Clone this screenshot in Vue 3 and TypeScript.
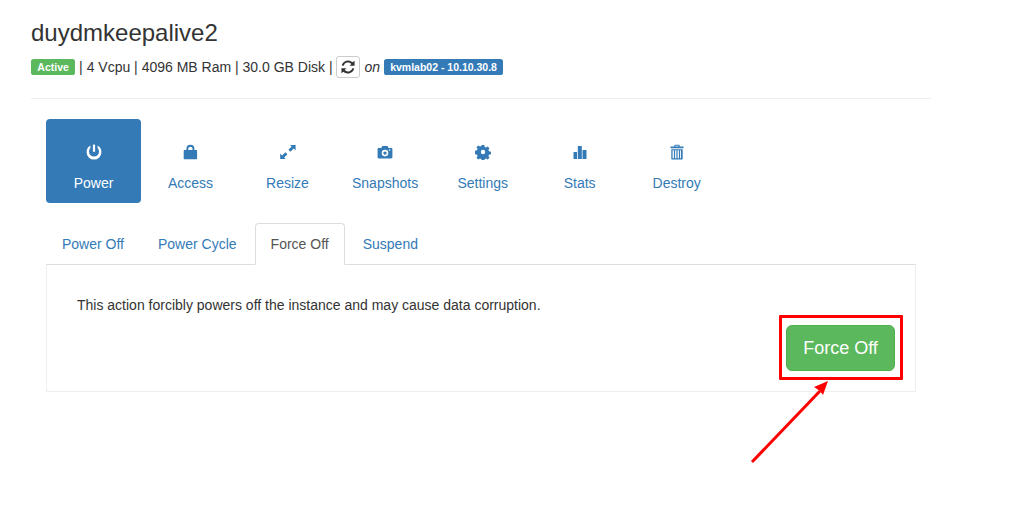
<script setup lang="ts">
interface PillItem {
  label: string;
  active?: boolean;
  paths: string[];
}

const pills: PillItem[] = [
  {
    label: "Power",
    active: true,
    paths: [
      "M6.900.6h2.200v7.200H6.900z",
      "M4.400 1.600v2.500a5 5 0 1 0 7.200 0V1.600a7.400 7.400 0 0 1 3.800 6.600 7.400 7.400 0 0 1-14.800 0 7.400 7.400 0 0 1 3.800-6.600z",
    ],
  },
  {
    label: "Access",
    paths: [
      "M3.400 6V4.800a4 4 0 0 1 8 0V6h2c.4 0 .7.300.7.700v7.900c0 .4-.3.700-.7.700H1.400c-.4 0-.7-.3-.7-.7V6.700c0-.4.3-.7.700-.7zm1.900-1.200V6h4.200V4.800c0-1.200-.9-2.100-2.100-2.100s-2.100.9-2.100 2.100z",
    ],
  },
  {
    label: "Resize",
    paths: [
      "M10 1h5.600v5.400l-1.900-1.900-3.300 3.300-2-2L11.700 2.500z",
      "M5.800 15H.2V9.600l1.900 1.900 3.300-3.300 2 2-3.300 3.300z",
    ],
  },
  {
    label: "Snapshots",
    paths: [
      "M.6 5.200c0-.7.500-1.200 1.200-1.200h2.500l1-1.900h5.200l1 1.900h2.700c.7 0 1.200.5 1.200 1.200v8.100c0 .7-.5 1.200-1.200 1.200H1.800c-.7 0-1.200-.5-1.200-1.200zM8 5.800a3.300 3.300 0 1 0 0 6.600 3.300 3.300 0 0 0 0-6.600zm0 1.600a1.700 1.700 0 1 1 0 3.400 1.700 1.700 0 0 1 0-3.400zM12.600 5.200a.8.800 0 1 0 0 1.600.8.800 0 0 0 0-1.600z",
    ],
  },
  {
    label: "Settings",
    paths: [
      "M6.700 1h2.600l.4 2 1.300.6 1.700-1.100 1.800 1.800-1.100 1.700.6 1.300 2 .4v2.600l-2 .4-.6 1.300 1.100 1.700-1.800 1.800-1.700-1.100-1.300.6-.4 2H6.700l-.4-2-1.300-.6-1.700 1.100-1.800-1.800 1.100-1.700-.6-1.300-2-.4V6.700l2-.4.6-1.300-1.100-1.700 1.800-1.800L5 2.600l1.300-.6zM8 5.800a2.200 2.200 0 1 0 0 4.400 2.200 2.200 0 0 0 0-4.400z",
    ],
  },
  {
    label: "Stats",
    paths: ["M1.500 8H5v7H1.500z", "M5.800 2h4v13h-4z", "M10.500 6h4v9h-4z"],
  },
  {
    label: "Destroy",
    paths: [
      "M6 .8h4c.4 0 .7.3.7.7v.9h3.800v1.900h-13V2.400h3.800v-.9c0-.4.3-.7.7-.7zm.4 1v.6h3.200v-.6z",
      "M2.300 5.200h11.400v9.500c0 .4-.3.7-.7.700H3c-.4 0-.7-.3-.7-.7zm1.300 1.100v8h1.300v-8zm2.500 0v8h1.300v-8zm2.500 0v8h1.300v-8zm2.500 0v8h.9v-8z",
    ],
  },
];

const tabs = ["Power Off", "Power Cycle", "Force Off", "Suspend"];
const activeTab = "Force Off";
</script>

<template>
  <div class="page">
    <h3 class="title">duydmkeepalive2</h3>
    <p class="meta">
      <span class="label label-green">Active</span>
      <span>| 4 Vcpu | 4096 MB Ram | 30.0 GB Disk |</span>
      <button class="refresh" type="button" aria-label="Refresh">
        <svg width="14" height="14" viewBox="0 0 16 16">
          <path
            d="M13.300 2.700 15.500 .8v5.700H9.800l2-2A5.200 5.200 0 0 0 3 6.600L.8 6.200a7.500 7.500 0 0 1 12.500-3.500zM2.700 13.300.5 15.200V9.500h5.700l-2 2a5.200 5.200 0 0 0 8.800-2.100l2.200.4a7.500 7.500 0 0 1-12.500 3.500z"
            fill="#333"
          />
        </svg>
      </button>
      <em class="on">on</em>
      <span class="label label-blue">kvmlab02 - 10.10.30.8</span>
    </p>
    <hr class="rule" />

    <div class="section">
      <ul class="pills">
        <li
          v-for="pill in pills"
          :key="pill.label"
          class="pill"
          :class="{ active: pill.active }"
        >
          <svg class="pill-icon" width="16" height="16" viewBox="0 0 16 16">
            <path
              v-for="d in pill.paths"
              :key="d"
              :d="d"
              fill="currentColor"
              fill-rule="evenodd"
            />
          </svg>
          <span>{{ pill.label }}</span>
        </li>
      </ul>

      <ul class="tabs">
        <li
          v-for="tab in tabs"
          :key="tab"
          class="tab"
          :class="{ active: tab === activeTab }"
        >
          {{ tab }}
        </li>
      </ul>

      <div class="panel">
        <p class="panel-text">
          This action forcibly powers off the instance and may cause data
          corruption.
        </p>
        <div class="panel-actions">
          <button class="force" type="button">Force Off</button>
        </div>
      </div>
    </div>

    <!-- annotation drawn on top of the screenshot -->
    <div class="mark"></div>
    <svg class="arrow" width="90" height="90" viewBox="0 0 90 90">
      <path d="M2 86 70 15" stroke="#f00" stroke-width="3" fill="none" />
      <path d="M78 5 64 11l6 4 3 4z" fill="#f00" />
    </svg>
  </div>
</template>

<style scoped>
.page {
  position: relative;
  box-sizing: border-box;
  width: 1009px;
  height: 505px;
  overflow: hidden;
  padding: 0 78px 0 31px;
  color: #333;
  font-family: "Liberation Sans", Arial, sans-serif;
  font-size: 14px;
  line-height: 20px;
}

.title {
  margin: 0;
  padding-top: 20px;
  font-size: 24px;
  font-weight: 400;
  line-height: 26px;
}

.meta {
  display: flex;
  align-items: center;
  margin: 10px 0 0;
  height: 22px;
}

.label {
  display: block;
  box-sizing: border-box;
  height: 16px;
  padding: 0 6px;
  border-radius: 2.6px;
  color: #fff;
  font-size: 10.5px;
  font-weight: 700;
  line-height: 16px;
  white-space: nowrap;
}

.label-green {
  background: #5cb85c;
  margin-right: 4px;
  padding: 0 6.3px;
}

.label-blue {
  background: #337ab7;
}

.refresh {
  display: flex;
  align-items: center;
  justify-content: center;
  box-sizing: border-box;
  width: 24px;
  height: 22px;
  margin-left: 3px;
  padding: 0;
  border: 1px solid #ccc;
  border-radius: 3px;
  background: #fff;
}

.on {
  margin: 0 4px 0 5px;
}

.rule {
  height: 1px;
  margin: 20px 0 0;
  border: 0;
  background: #eee;
}

.section {
  padding: 20px 15px 0;
}

.pills {
  display: flex;
  gap: 2px;
  margin: 0;
  padding: 0;
  list-style: none;
}

.pill {
  display: flex;
  flex-direction: column;
  align-items: center;
  box-sizing: border-box;
  min-width: 95px;
  height: 84px;
  padding: 25px 15px 0;
  border-radius: 4px;
  color: #337ab7;
}

.pill.active {
  background: #337ab7;
  color: #fff;
}

.pill-icon {
  margin-bottom: 13px;
}

.tabs {
  display: flex;
  gap: 2px;
  height: 41px;
  margin: 20px 0 0;
  padding: 0;
  list-style: none;
}

.tab {
  box-sizing: border-box;
  height: 42px;
  padding: 10px 15px;
  border: 1px solid transparent;
  border-radius: 4px 4px 0 0;
  color: #337ab7;
  line-height: 20px;
  white-space: nowrap;
}

.tab.active {
  position: relative;
  z-index: 1;
  border-color: #ddd #ddd #fff;
  background: #fff;
  color: #555;
}

.panel {
  box-sizing: border-box;
  height: 128px;
  padding: 30px 20px 0 30px;
  border: 1px solid #eee;
  border-top-color: #ddd;
}

.panel-text {
  margin: 0;
}

.panel-actions {
  display: flex;
  justify-content: flex-end;
  margin-top: 10px;
}

.force {
  box-sizing: border-box;
  width: 109px;
  height: 46px;
  padding: 0;
  border: 1px solid #4cae4c;
  border-radius: 6px;
  background: #5cb85c;
  color: #fff;
  font-family: inherit;
  font-size: 18px;
  line-height: 24px;
}

.mark {
  position: absolute;
  left: 779px;
  top: 315px;
  box-sizing: border-box;
  width: 124px;
  height: 65px;
  border: 3px solid #f00;
  border-radius: 1px;
}

.arrow {
  position: absolute;
  left: 750px;
  top: 376px;
}
</style>

<style>
html,
body {
  margin: 0;
  background: #fff;
}
</style>
